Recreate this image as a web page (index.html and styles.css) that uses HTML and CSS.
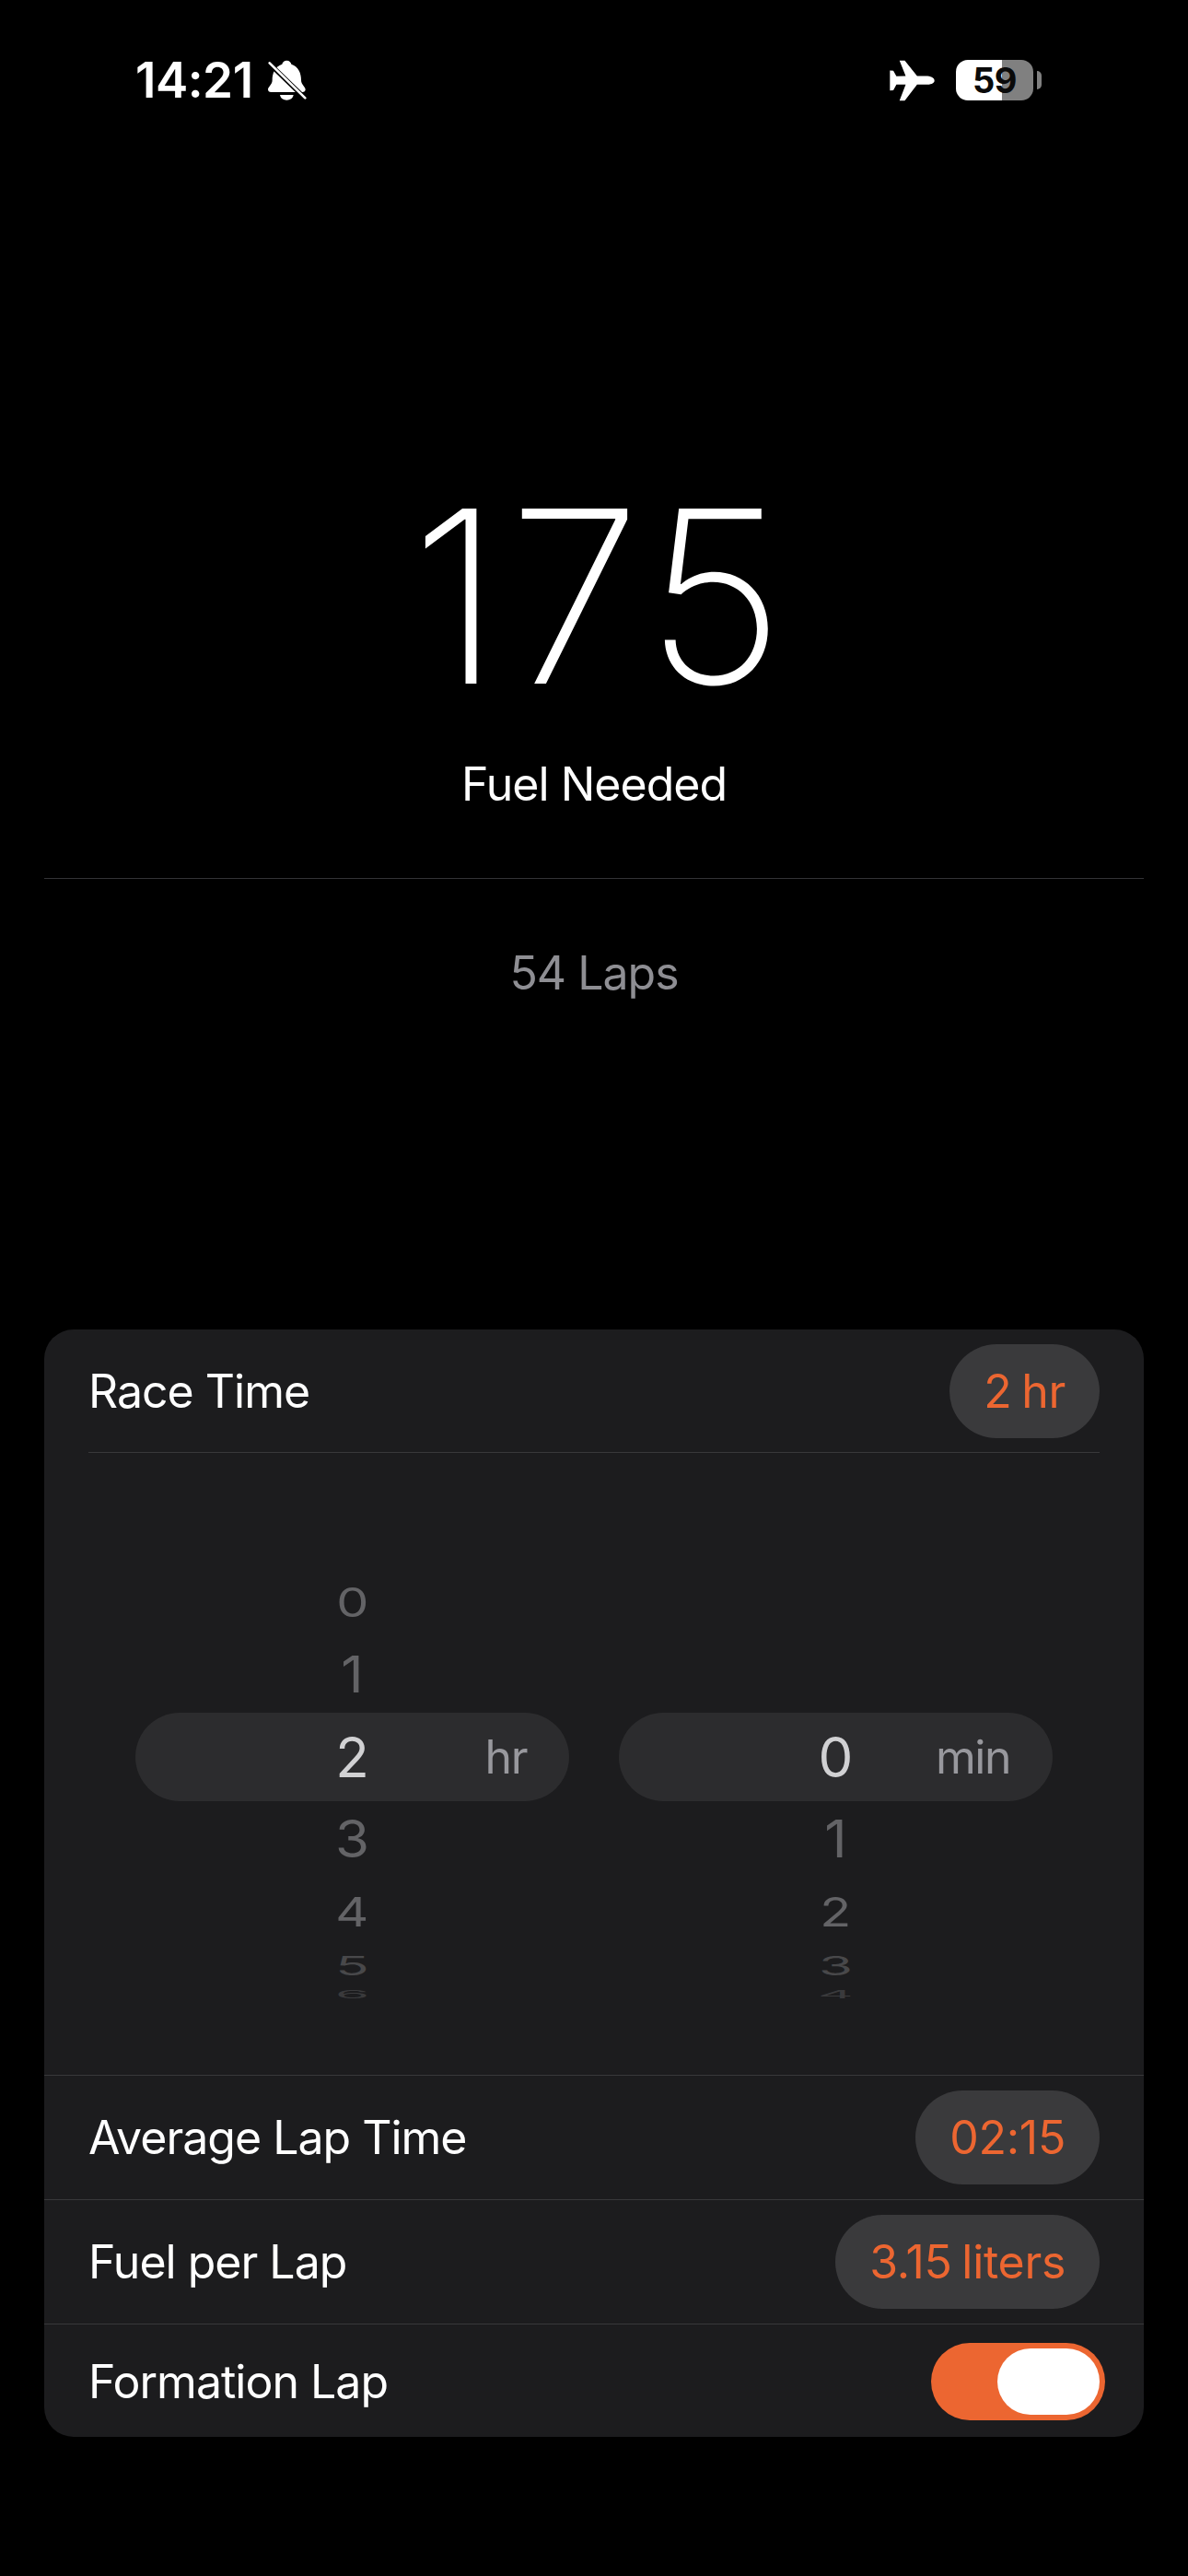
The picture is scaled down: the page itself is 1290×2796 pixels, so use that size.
FILE: index.html
```html
<!DOCTYPE html>
<html lang="en">
<head>
<meta charset="utf-8">
<title>Fuel Needed</title>
<link rel="stylesheet" href="styles.css">
</head>
<body>
<div class="status">
  <div class="status-left">
    <span class="clock">14:21</span>
    <svg class="bell" viewBox="578 78 128 132"><path fill="#fff" d="M640 80c-8 0-14 5-15 12-24 8-32 30-32 52 0 14-14 22-14 30 0 6 4 9 10 9h102c6 0 10-3 10-9 0-8-14-16-14-30 0-22-8-44-32-52-1-7-7-12-15-12z"/><path fill="#fff" d="M618 192c2 11 11 17 22 17s20-6 22-17z"/><path stroke="#000" stroke-width="15" d="M575 82 705 208"/><path stroke="#fff" stroke-width="8" stroke-linecap="round" d="M584 88 700 202"/></svg>
  </div>
  <div class="status-right">
    <svg class="plane" viewBox="138 78 146 134"><path fill="#fff" d="M283 145c0-10-13-15-28-15h-28l-40-50h-17l20 50-30 1-10-18-11-1v65l11-1 10-18 30 0-20 52h17l40-52h28c15 0 28-3 28-13z"/></svg>
    <div class="battery"><span>59</span></div>
    <div class="nub"></div>
  </div>
</div>

<div class="hero">
  <div class="big">175</div>
  <div class="label">Fuel Needed</div>
</div>
<div class="rule"></div>
<div class="laps">54 Laps</div>

<div class="card">
  <div class="row first">
    <span>Race Time</span>
    <span class="pill">2 hr</span>
  </div>
  <div class="picker">
    <div class="wheel">
      <div class="cell h72 c1"><span class="s74">0</span></div>
      <div class="cell h84 c1"><span class="s91">1</span></div>
      <div class="sel"><span></span><span class="sel-num">2</span><span class="unit">hr</span></div>
      <div class="cell h82 c1"><span class="s93">3</span></div>
      <div class="cell h76 c1"><span class="s74">4</span></div>
      <div class="cell h40 c2"><span class="s48">5</span></div>
      <div class="cell h24 c3"><span class="s20">6</span></div>
    </div>
    <div class="wheel">
      <div class="blank"></div>
      <div class="sel"><span></span><span class="sel-num">0</span><span class="unit">min</span></div>
      <div class="cell h82 c1"><span class="s93">1</span></div>
      <div class="cell h76 c1"><span class="s74">2</span></div>
      <div class="cell h40 c2"><span class="s48">3</span></div>
      <div class="cell h24 c3"><span class="s20">4</span></div>
    </div>
  </div>
  <div class="row">
    <span>Average Lap Time</span>
    <span class="pill">02:15</span>
  </div>
  <div class="row">
    <span>Fuel per Lap</span>
    <span class="pill">3.15 liters</span>
  </div>
  <div class="row last">
    <span>Formation Lap</span>
    <div class="toggle"><div class="thumb"></div></div>
  </div>
</div>
</body>
</html>
```
FILE: styles.css
```css
* { box-sizing: border-box; }
html, body { margin: 0; padding: 0; }
body {
  width: 1290px;
  height: 2796px;
  background: #000;
  color: #fff;
  font-family: Inter, "Liberation Sans", sans-serif;
  overflow: hidden;
}
.status {
  height: 174px;
  display: flex;
  justify-content: space-between;
  align-items: center;
  padding: 0 159px 0 147px;
}
.status-left, .status-right { display: flex; align-items: center; }
.clock { font-size: 53px; font-weight: 600; line-height: 60px; letter-spacing: -.5px; }
.bell { width: 44px; height: 44px; margin-left: 15px; }
.plane { width: 49px; height: 45px; margin-right: 23px; }
.battery {
  width: 84px;
  height: 44px;
  border-radius: 13px;
  background: linear-gradient(to right, #fff 0, #fff 50px, #808080 50px);
  color: #0a0a0a;
  font-size: 38px;
  font-weight: 700;
  line-height: 44px;
  text-align: center;
  letter-spacing: -.5px;
}
.nub { width: 5px; height: 20px; margin-left: 4px; background: #808080; border-radius: 0 5px 5px 0; }

.hero { text-align: center; padding-top: 378px; }
.big { font-size: 261px; font-weight: 150; line-height: 190px; height: 190px; letter-spacing: 7px; padding-left: 14px; }
.label { font-size: 50px; font-weight: 380; line-height: 60px; margin-top: 79px; letter-spacing: -1px; }
.rule { height: 1px; margin: 72px 48px 0; background: #333336; }
.laps { font-size: 50px; font-weight: 380; line-height: 60px; margin-top: 72px; text-align: center; color: #8e8e93; letter-spacing: -1px; }

.card {
  margin: 357px 48px 0;
  background: #1c1c1e;
  border-radius: 32px;
  font-size: 50px;
  font-weight: 380;
  line-height: 60px;
  letter-spacing: -1px;
}
.row {
  display: flex;
  justify-content: space-between;
  align-items: center;
  padding: 15px 48px 16px;
  border-top: 1px solid #38383a;
  height: 135px;
}
.row.first {
  border-top: 0;
  height: 134px;
  margin: 0 48px;
  padding: 16px 0 15px;
  border-bottom: 1px solid #38383a;
}
.row.last { height: 123px; padding: 20px 42px 18px 48px; }
.pill {
  height: 102px;
  line-height: 102px;
  padding: 0 37px;
  border-radius: 51px;
  background: #3a3a3c;
  color: #ec6631;
  letter-spacing: -.3px;
  word-spacing: -3px;
}
.toggle {
  width: 189px;
  height: 84px;
  border-radius: 42px;
  background: #ec6631;
  display: flex;
  justify-content: flex-end;
  align-items: center;
  padding-right: 6px;
}
.thumb { width: 111px; height: 72px; border-radius: 36px; background: #fff; }

.picker {
  height: 675px;
  padding: 126px 0 0 99px;
  display: flex;
  gap: 54px;
  font-size: 60px;
  letter-spacing: 0;
}
.wheel { width: 471px; }
.blank { height: 156px; }
.cell { display: flex; justify-content: center; align-items: center; line-height: 60px; }
.cell span { display: block; }
.h72 { height: 72px; }
.h84 { height: 84px; }
.h82 { height: 82px; }
.h76 { height: 76px; }
.h40 { height: 40px; }
.h24 { height: 24px; overflow: visible; }
.c1 { color: #636366; }
.c2 { color: #48484a; }
.c3 { color: #3a3a3c; }
.s74 { transform: scale(.93, .74); }
.s91 { transform: scaleY(.91); }
.s93 { transform: scaleY(.93); }
.s48 { transform: scaleY(.48); }
.s20 { transform: scaleY(.2); }
.sel {
  height: 96px;
  border-radius: 48px;
  background: #2c2c2e;
  display: grid;
  grid-template-columns: 1fr auto 1fr;
  align-items: center;
}
.sel-num { color: #d1d1d3; line-height: 60px; }
.unit { font-size: 50px; line-height: 60px; color: #98989d; justify-self: end; padding-right: 46px; letter-spacing: -1.5px; }
```
